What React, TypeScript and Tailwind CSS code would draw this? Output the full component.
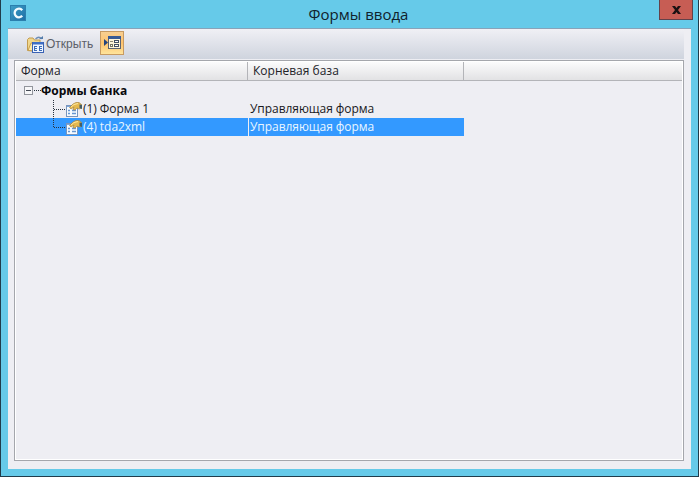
import React from 'react';

function LogoIcon() {
  return (
    <svg width="16" height="16" viewBox="0 0 16 16" className="block">
      <defs>
        <linearGradient id="logo" x1="0" y1="0" x2="1" y2="1">
          <stop offset="0" stopColor="#3fa0c8" />
          <stop offset="1" stopColor="#1c6ca4" />
        </linearGradient>
      </defs>
      <rect width="16" height="16" fill="url(#logo)" />
      <rect x=".5" y=".5" width="15" height="15" fill="none" stroke="#2b7fae" />
      <path d="M12.2 5.2A4.3 4.3 0 1 0 12.2 10.8" fill="none" stroke="#f2fbff" strokeWidth="2.3" />
    </svg>
  );
}

function OpenFormIcon() {
  return (
    <svg width="17" height="17" viewBox="0 0 17 17" className="block">
      <path d="M.5 14.5V3.5L2 2h4l1.5 2H13v3H8v8z" fill="#f0d78d" stroke="#c39c50" />
      <path d="M1 14.5 4 7h8l-3 8z" fill="#ffe9a6" stroke="#c7a050" />
      <path d="M8.5 3Q12-.5 14.5 3" fill="none" stroke="#6d8db5" strokeWidth="1.3" />
      <path d="M12 3h4V0z" fill="#527bab" />
      <rect x="5.5" y="6.5" width="11" height="10" fill="#eef5ff" stroke="#3a62b4" />
      <rect x="6" y="6" width="10" height="2.5" fill="#3e6ec5" />
      <path d="M7 10.5h3M7 12.5h3M7 14.5h3M12 10.5h3M12 12.5h3M12 14.5h3" stroke="#3b6bb8" />
      <path d="M7.5 10v5M12.5 10v5" stroke="#3b6bb8" />
    </svg>
  );
}

function FormPanelIcon() {
  return (
    <svg width="17" height="14" viewBox="0 0 17 14" className="block">
      <path d="M0 3v7l4-3.5z" fill="#25457d" />
      <rect x="4.5" y=".5" width="12" height="12" fill="#fff4d8" stroke="#5c6472" />
      <rect x="4" y="0" width="13" height="3" fill="#385a94" />
      <path d="M6 5.5h3M6 9.5h3" stroke="#8f8874" />
      <rect x="10.5" y="4.5" width="4" height="2" fill="#fff" stroke="#454f60" />
      <rect x="10.5" y="8.5" width="4" height="2" fill="#fff" stroke="#454f60" />
      <rect x="6.5" y="8.5" width="2" height="2" fill="#fff" stroke="#77745f" />
    </svg>
  );
}

function PropertiesIcon() {
  return (
    <svg width="16" height="15" viewBox="0 0 16 15" className="block shrink-0">
      <rect x=".5" y="3.5" width="11" height="11" fill="#f7fbff" stroke="#7895bd" />
      <path d="M1 4.5h10" stroke="#7da6d9" />
      <path d="M2 8.5h2M2 11.5h2M6 8.5h4M6 11.5h4" stroke="#6696d1" strokeWidth="1.3" />
      <path d="M3.5 5.5 7 2l3-1.5h3L16 3v3l-3 1-2-1-2 2-2-.5L8 5 5 7z" fill="#e5b94e" stroke="#a9843c" strokeWidth=".7" />
      <path d="M5 5l3-2.5L12 1.5" stroke="#ffe8a0" fill="none" />
      <path d="M13.5 2.5 16 3v4l-2.5-1z" fill="#445d67" />
    </svg>
  );
}

function FormRow({ name, base, selected, last }: { name: string; base: string; selected?: boolean; last?: boolean }) {
  const color = selected ? 'text-[#e9f6ff]' : 'text-[#18181c]';
  return (
    <div className={`flex h-[18px] w-[448px] ${color}`}>
      <div className={`flex w-[232px] items-center ${selected ? 'bg-[#3399ff]' : ''}`}>
        <svg width="50" height="18" className="block shrink-0">
          <path d={last ? 'M37.5 0V10' : 'M37.5 0V18'} stroke="#29333e" strokeDasharray="1 1" />
          <path d="M38 9.5H49" stroke="#29333e" strokeDasharray="1 1" />
        </svg>
        <PropertiesIcon />
        <span className={selected ? 'ml-[1px] tracking-[-0.05px]' : 'ml-[1px] tracking-[-0.05px]'}>{name}</span>
      </div>
      <div className={`ml-px flex flex-1 items-center pl-px ${selected ? 'bg-[#3399ff]' : ''}`}>
        <span className="tracking-[-0.05px]">{base}</span>
      </div>
    </div>
  );
}

export default function App() {
  return (
    <div className="flex h-[477px] w-[699px] flex-col overflow-hidden border-x border-b border-[#203c4b] bg-[#66cae9] font-['Open_Sans','Noto_Sans',sans-serif] text-[12px] leading-[18px] whitespace-nowrap">
      <header className="flex h-7 shrink-0 items-start justify-between pl-[9px] pr-[5px]">
        <div className="w-[46px] pt-[5px]"><LogoIcon /></div>
        <h1 className="pl-[2px] pt-[1px] text-[15px] leading-[26px] text-[#10222c]">Формы ввода</h1>
        <button className="flex h-5 w-[34px] items-center justify-center border border-t-0 border-[#63424a] bg-[#c75d54]" aria-label="Закрыть">
          <svg width="9" height="8" viewBox="0 0 9 8"><path d="M0 0h3l1.5 2L6 0h3L6 4l3 4H6L4.5 6 3 8H0l3-4z" fill="#1b1112" /></svg>
        </button>
      </header>
      <main className="mx-[7px] flex h-[441px] flex-col border-t border-[#88a3b9] bg-[#eeeef3] pr-[7px]">
        <div className="flex h-[30px] shrink-0 items-center bg-linear-to-b from-[#f0f0f5] to-[#cfd4de] pl-[19px]">
          <OpenFormIcon />
          <span className="ml-[2px] font-['Liberation_Sans',sans-serif] text-[12px] text-[#5c6068]">Открыть</span>
          <button className="ml-[7px] mt-[-3px] flex h-6 w-6 items-center justify-center border border-[#c79a62] bg-linear-to-b from-[#f8cf91] via-[#ffc36c] to-[#ffe49b]"><FormPanelIcon /></button>
        </div>
        <section className="mt-px ml-[6px] flex h-[401px] w-[670px] flex-col border border-[#a4a6ac]">
          <div className="flex flex-1 flex-col border border-white">
            <div className="flex h-[19px] shrink-0 border-b border-[#b3b4b8] bg-linear-to-b from-[#fbfbfc] to-[#e2e2e4] text-[#222228]">
              <div className="w-[232px] border-r border-[#b3b4b8] pl-[5px]">Форма</div>
              <div className="w-[216px] border-r border-[#b3b4b8] pl-[5px]">Корневая база</div>
            </div>
            <div className="mt-px flex h-[18px] items-center font-bold text-[#08080b]">
              <svg width="25" height="18" className="block shrink-0">
                <rect x="8.5" y="4.5" width="8" height="8" fill="#f7f7f9" stroke="#92959c" />
                <path d="M10 8.5h5" stroke="#444a54" />
                <path d="M18 8.5h7" stroke="#29333e" strokeDasharray="1 1" />
              </svg>
              Формы банка
            </div>
            <FormRow name="(1) Форма 1" base="Управляющая форма" />
            <FormRow name="(4) tda2xml" base="Управляющая форма" selected last />
          </div>
        </section>
      </main>
    </div>
  );
}
